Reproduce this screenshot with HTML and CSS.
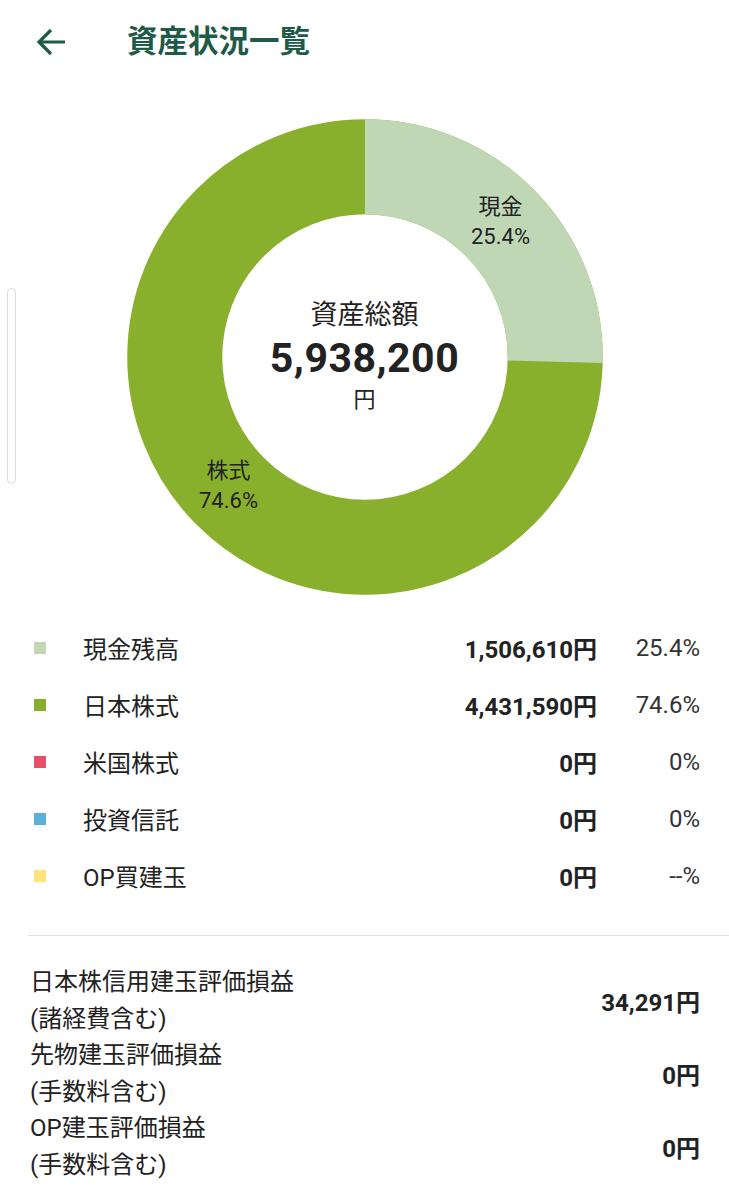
FILE: index.html
```html
<!DOCTYPE html>
<html lang="ja">
<head>
<meta charset="utf-8">
<title>資産状況一覧</title>
<link rel="stylesheet" href="styles.css">
</head>
<body>
<div class="page">
  <header class="header">
    <svg class="back" width="30" height="28" viewBox="0 0 30 28" aria-hidden="true">
      <path d="M29 14H3.5 M15 2L3 14L15 26" fill="none" stroke="#1e5a48" stroke-width="3.2" stroke-linecap="butt" stroke-linejoin="miter"/>
    </svg>
    <h1 class="title">資産状況一覧</h1>
  </header>

  <section class="chart">
    <svg class="donut" width="476" height="476" viewBox="0 0 476 476" aria-hidden="true">
      <circle cx="238" cy="238" r="190.25" fill="none" stroke="#88b02d" stroke-width="95"/>
      <circle cx="238" cy="238" r="190.25" fill="none" stroke="#bfd7b5" stroke-width="95"
        stroke-dasharray="303.6 2000" transform="rotate(-90 238 238)"/>
    </svg>
    <div class="slice-label slice-cash"><span class="sl-name">現金</span><span class="sl-pct">25.4%</span></div>
    <div class="slice-label slice-stock"><span class="sl-name">株式</span><span class="sl-pct">74.6%</span></div>
    <div class="center">
      <div class="center-title">資産総額</div>
      <div class="center-value">5,938,200</div>
      <div class="center-unit">円</div>
    </div>
  </section>

  <ul class="legend">
    <li class="row"><span class="swatch sw-cash"></span><span class="name">現金残高</span><span class="amount">1,506,610円</span><span class="pct">25.4%</span></li>
    <li class="row"><span class="swatch sw-jp"></span><span class="name">日本株式</span><span class="amount">4,431,590円</span><span class="pct">74.6%</span></li>
    <li class="row"><span class="swatch sw-us"></span><span class="name">米国株式</span><span class="amount">0円</span><span class="pct">0%</span></li>
    <li class="row"><span class="swatch sw-fund"></span><span class="name">投資信託</span><span class="amount">0円</span><span class="pct">0%</span></li>
    <li class="row"><span class="swatch sw-op"></span><span class="name">OP買建玉</span><span class="amount">0円</span><span class="pct">--%</span></li>
  </ul>

  <hr class="divider">

  <div class="pl">
    <div class="pl-row"><div class="pl-label">日本株信用建玉評価損益<br>(諸経費含む)</div><div class="pl-value">34,291円</div></div>
    <div class="pl-row"><div class="pl-label">先物建玉評価損益<br>(手数料含む)</div><div class="pl-value">0円</div></div>
    <div class="pl-row"><div class="pl-label">OP建玉評価損益<br>(手数料含む)</div><div class="pl-value">0円</div></div>
  </div>

  <div class="scrollbar"></div>
</div>
</body>
</html>
```
FILE: styles.css
```css
* { box-sizing: border-box; }
html, body { margin: 0; padding: 0; background: #fff; }
body {
  font-family: Roboto, "Noto Sans CJK JP", sans-serif;
  color: #222;
}
.page { position: relative; width: 729px; min-height: 1200px; overflow: hidden; }

.header {
  height: 84px;
  display: flex;
  align-items: center;
  padding-left: 36px;
}
.back { display: block; flex: none; }
.title {
  margin: 0 0 0 61px;
  font-size: 30.5px;
  font-weight: 700;
  color: #1d5a47;
  line-height: 1;
}

.chart {
  position: relative;
  width: 476px;
  height: 476px;
  margin: 35px auto 0;
}
.donut { display: block; }
.slice-label {
  position: absolute;
  transform: translate(-50%, -50%);
  display: flex;
  flex-direction: column;
  align-items: center;
  font-size: 22px;
  line-height: 30px;
  color: #222;
  white-space: nowrap;
}
.slice-cash { left: 374px; top: 103px; }
.slice-stock { left: 102px; top: 367px; }
.center {
  position: absolute;
  left: 0; right: 0; top: 178px;
  display: flex;
  flex-direction: column;
  align-items: center;
}
.center-title { font-size: 27px; line-height: 36px; color: #222; }
.center-value { font-size: 41px; font-weight: 700; line-height: 50px; color: #222; letter-spacing: 0.5px; }
.center-unit { font-size: 22px; line-height: 34px; color: #222; }

.legend {
  list-style: none;
  margin: 24px 0 0;
  padding: 0;
}
.row {
  height: 57px;
  display: flex;
  align-items: center;
  padding: 0 29px 0 34px;
  font-size: 24px;
}
.swatch { width: 12px; height: 12px; flex: none; }
.sw-cash { background: #bfd7b5; }
.sw-jp { background: #88b02d; }
.sw-us { background: #e5506a; }
.sw-fund { background: #5bafd9; }
.sw-op { background: #fde47a; }
.name { margin-left: 37px; flex: 1; }
.amount { font-weight: 700; }
.pct { width: 103px; text-align: right; color: #333; }

.divider {
  margin: 31px 0 0 28px;
  border: 0;
  border-top: 1px solid #e2e2e2;
  height: 0;
}

.pl { padding: 28px 29px 0 30px; }
.pl-row {
  display: flex;
  align-items: center;
  justify-content: space-between;
}
.pl-label { font-size: 24px; line-height: 36.5px; }
.pl-value { font-size: 24px; font-weight: 700; }

.scrollbar {
  position: absolute;
  left: 7px;
  top: 288px;
  width: 9px;
  height: 196px;
  border: 1px solid #dcdcdc;
  border-radius: 5px;
}
```
